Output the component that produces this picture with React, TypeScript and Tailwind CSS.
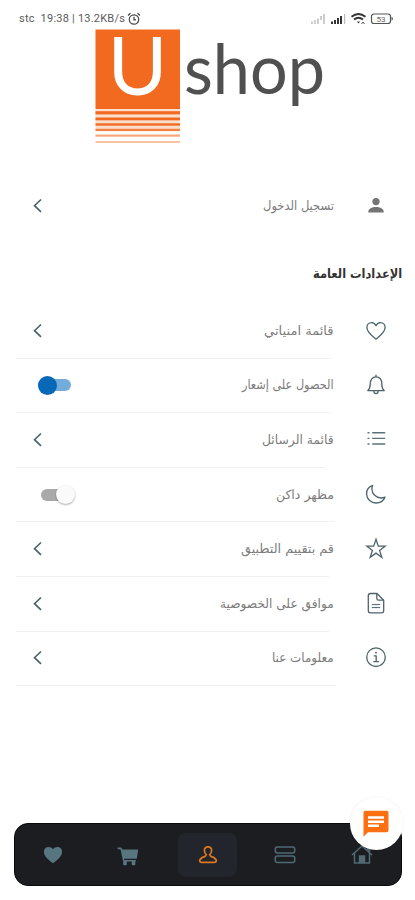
import React from "react";

const ink = "#4d646b";

function Icon({ name }: { name: string }) {
  const p = { fill: "none", stroke: ink, strokeWidth: 1.3, strokeLinecap: "round" as const, strokeLinejoin: "round" as const };
  return (
    <svg className="h-6 w-6 shrink-0" viewBox="0 0 24 24">
      {name === "user" && (
        <g fill="#747474">
          <circle cx="12" cy="7.6" r="3.6" />
          <path d="M4.4 18.5v-1.2c0-3 4.4-4.4 7.6-4.4s7.6 1.4 7.6 4.4v1.2z" />
        </g>
      )}
      {name === "heart" && <path {...p} d="M12 20.2C7.5 16.8 2.9 12.8 2.9 8.6c0-2.8 2-5 4.6-5 1.9 0 3.6 1.1 4.5 3 .9-1.9 2.6-3 4.5-3 2.6 0 4.6 2.2 4.6 5 0 4.2-4.6 8.2-9.1 11.6z" />}
      {name === "bell" && <path {...p} d="M12 2.2v1.700M3.800 17.600c1.700-1.400 2.400-3.200 2.400-6.500 0-4.400 2.200-7.200 5.800-7.200s5.800 2.800 5.800 7.200c0 3.300.7 5.100 2.400 6.500zM9.800 18c.1 1.900 1 2.700 2.200 2.700s2.100-.8 2.200-2.700" />}
      {name === "list" && (
        <g stroke="#5d7278" strokeWidth="1.400">
          <path d="M8.200 4.700h13M8.200 10.400h13M8.200 16h13M3.500 4.700h2M3.500 10.400h2M3.500 16h2" />
        </g>
      )}
      {name === "moon" && <path {...p} d="M8.700 2.400C4.900 3.700 2.600 6.800 2.600 10.700c0 5.200 4.200 9.300 9.400 9.300 4 0 7.500-2.200 9-5.800-1.300.6-2.500.8-3.900.8-5.100 0-9.200-4.100-9.200-9 0-1.300.2-2.500.8-3.600z" />}
      {name === "star" && <path {...p} strokeLinejoin="miter" d="M12 2.300l2.300 6.900h6.800l-5.500 4.200 2.200 6.900-5.800-4.200-5.800 4.200 2.200-6.900-5.500-4.200h6.800z" />}
      {name === "doc" && (
        <g {...p}>
          <path d="M13 1.500H6.500c-1.300 0-2.200.9-2.200 2.200v14.900c0 1.300.9 2.200 2.200 2.200h11c1.300 0 2.200-.9 2.200-2.200V8.200z" />
          <path d="M12.800 1.700v4.700c0 1.200.7 1.800 1.800 1.800h4.900" />
          <path d="M8.200 12.600h7.600M8.200 15.600h7.600" strokeWidth="1" />
        </g>
      )}
      {name === "info" && (
        <g {...p}>
          <circle cx="12" cy="11.200" r="9.300" />
          <path d="M10.200 9.800h2v5.800M9.900 15.700h4.500" />
          <circle cx="12" cy="6.700" r=".9" fill={ink} stroke="none" />
        </g>
      )}
    </svg>
  );
}

function Chevron() {
  return (
    <svg className="ml-[33px] h-4 w-[9px]" viewBox="0 0 9 16" fill="none" stroke="#486368" strokeWidth="1.600">
      <path d="M8 1.500L1.500 7.700 8 13.900" />
    </svg>
  );
}

function Toggle({ on }: { on?: boolean }) {
  return on ? (
    <div className="ml-[38px] flex h-3 w-[33px] items-center rounded-full bg-[#73acdb]">
      <div className="h-[19px] w-[19px] shrink-0 rounded-full bg-[#0868b8]" />
    </div>
  ) : (
    <div className="ml-[41px] flex h-3 w-[34px] items-center justify-end rounded-full bg-[linear-gradient(to_right,#a9a9a9_70%,transparent_70%)]">
      <div className="h-[19px] w-[19px] shrink-0 rounded-full bg-[#fafafa] shadow-[0_1px_2px_#0005]" />
    </div>
  );
}

type Item = { icon: string; label: string; width: number; control?: "on" | "off"; line?: string };

const items: Item[] = [
  { icon: "heart", label: "قائمة امنياتي", width: 70, line: "w-[316px]" },
  { icon: "bell", label: "الحصول على إشعار", width: 92, control: "on", line: "w-[316px]" },
  { icon: "list", label: "قائمة الرسائل", width: 72, line: "w-[309px]" },
  { icon: "moon", label: "مظهر داكن", width: 58, control: "off", line: "w-[319px]" },
  { icon: "star", label: "قم بتقييم التطبيق", width: 93, line: "w-[313px]" },
  { icon: "doc", label: "موافق على الخصوصية", width: 114, line: "w-[313px]" },
  { icon: "info", label: "معلومات عنا", width: 62, line: "w-[320px]" },
];

// Narrows or widens a label so that its line has the given measure.
function Fit({ text, width, className }: { text: string; width: number; className: string }) {
  const ref = React.useRef<HTMLSpanElement>(null);
  const [scale, setScale] = React.useState(1);
  React.useLayoutEffect(() => {
    if (ref.current) setScale(width / ref.current.offsetWidth);
  }, [width]);
  return (
    <span ref={ref} dir="rtl" className={"inline-block origin-right whitespace-nowrap " + className} style={{ transform: `scaleX(${scale})` }}>
      {text}
    </span>
  );
}

function Row({ item }: { item: Item }) {
  return (
    <div className="h-[54.600px]">
      <div className="flex h-[53.600px] items-center">
        {item.control ? <Toggle on={item.control === "on"} /> : <Chevron />}
        <div className="flex flex-1 justify-end pr-[29.500px]">
          <Fit text={item.label} width={item.width} className="text-[12.500px] leading-5 text-[#7c7c7c]" />
        </div>
        <div className="mr-[27.500px] flex"><Icon name={item.icon} /></div>
      </div>
      {item.line && <div className={"ml-4 h-px bg-[#f1f1f1] " + item.line} />}
    </div>
  );
}

function Logo() {
  return (
    <svg className="ml-[94px] h-[118px] w-[232px] overflow-visible" viewBox="94 28 232 118">
      <rect x="95.500" y="29.500" width="84.500" height="79.500" fill="#f26a20" />
      <g fill="#f26a20">
        <rect x="95.500" y="111.200" width="84.500" height="3.200" />
        <rect x="95.500" y="117.500" width="84.500" height="2.800" />
        <rect x="95.500" y="123.300" width="84.500" height="2.400" />
        <rect x="95.500" y="128.800" width="84.500" height="2.300" opacity=".85" />
        <rect x="95.500" y="134.500" width="84.500" height="2.200" opacity=".6" />
        <rect x="95.500" y="141" width="84.500" height="2" opacity=".4" />
        <rect x="95.500" y="109" width="84.500" height="20" opacity=".22" />
      </g>
      <text x="107.500" y="95" fontFamily="Lato, sans-serif" fontSize="82" fill="#fff" textLength="60" lengthAdjust="spacingAndGlyphs">U</text>
      <text x="184" y="94" fontFamily="Lato, sans-serif" fontSize="69" fill="#505050" textLength="141" lengthAdjust="spacingAndGlyphs">shop</text>
    </svg>
  );
}

function StatusBar() {
  return (
    <div className="flex h-7 items-center pt-[10px] text-[#5b5b5b]">
      <span className="ml-[19px] whitespace-pre font-[Roboto] text-[11px] leading-4 tracking-[0.220px]">stc  19:38 | 13.2KB/s</span>
      <svg className="ml-[2px] h-[14px] w-[14px]" viewBox="0 0 14 14" fill="none" stroke="#444" strokeWidth="1.200">
        <circle cx="7" cy="7.500" r="4.700" /><path d="M7 4.800v3h2M1 3.500l2.500-2.200M13 3.500l-2.500-2.200" />
      </svg>
      <svg className="ml-auto mr-[20px] h-[14px] w-[86px]" viewBox="0 0 86 14">
        <g fill="#ccc"><rect x="2" y="9.500" width="2" height="2.500" /><rect x="5" y="8" width="2" height="4" /><rect x="8" y="6.500" width="2" height="5.500" /><rect x="11" y="4" width="2" height="4" /><rect x="14" y="2" width="2" height="10" /></g>
        <g fill="#333"><rect x="22" y="9.500" width="2" height="2.500" /><rect x="25" y="8" width="2" height="4" /><rect x="28" y="6" width="2" height="6" /><rect x="31" y="4" width="2" height="8" /><rect x="35" y="2" width="1.200" height="10" fill="#bbb" /></g>
        <g fill="none" stroke="#333" strokeWidth="2"><path d="M42.500 4.800q7-5.500 14 0M45 7.500q4.500-3.500 9 0" /><path d="M48 9.500h3l-1.500 2z" fill="#333" stroke="none" /><path d="M52.500 12l1.500-2 1.500 2" strokeWidth=".8" /></g>
        <rect x="62.500" y="2" width="19" height="9.500" rx="2.500" fill="none" stroke="#555" strokeWidth="1.200" />
        <path d="M82.500 4.700q3 2 0 4z" fill="#555" />
        <text x="72" y="9.500" textAnchor="middle" fontFamily="Roboto, sans-serif" fontSize="8" fill="#666">53</text>
      </svg>
    </div>
  );
}

function BottomNav() {
  return (
    <nav className="relative ml-[14px] flex h-[63px] w-[388px] items-center rounded-[14px] border-[1.500px] border-[#07090b] bg-[#1b1d21]">
      <div className="flex w-[75px] justify-center">
        <svg className="h-5 w-5" viewBox="0 0 20 20" fill="#587680"><path d="M10 18.200C5.500 14.800.9 11.300.9 6.700c0-2.900 2.100-4.800 4.600-4.800 1.800 0 3.500.8 4.500 2.400 1-1.600 2.700-2.400 4.500-2.400 2.500 0 4.600 1.900 4.600 4.800 0 4.600-4.600 8.100-9.100 11.500z" /></svg>
      </div>
      <div className="flex w-[76px] justify-center">
        <svg className="mt-[4px] h-[22px] w-[22px]" viewBox="0 0 22 22" fill="#587680">
          <path d="M.5 1.500h3.300c.6 0 .9.300 1.100.9l.3 1h16l-1.300 8.500c-.1.600-.5.900-1.100.9H7l.2 1.200h11.600v1.400H6.800c-.5 0-.8-.3-.9-.8L3.600 3.400.5 2.900z" />
          <rect x="6.200" y="15" width="3.600" height="4.300" rx="1" /><rect x="14.700" y="15" width="3.600" height="4.300" rx="1" />
        </svg>
      </div>
      <div className="ml-[12px] flex h-11 w-[59px] items-center justify-center rounded-lg bg-[#22252c]">
        <svg className="h-5 w-5" viewBox="0 0 20 20" fill="none" stroke="#dd771e" strokeWidth="1.700" strokeLinejoin="round">
          <path d="M10 1.800c-2.200 0-3.600 1.500-3.600 3.700 0 1.800.8 3.400 2 4.200-.2 1-.9 1.500-1.900 1.900-2.300.9-4.800 1.900-4.800 4.200 0 1 .8 1.600 2 1.600h12.600c1.200 0 2-.6 2-1.600 0-2.300-2.500-3.300-4.800-4.200-1-.4-1.700-.9-1.900-1.900 1.200-.8 2-2.400 2-4.200 0-2.200-1.400-3.700-3.600-3.700z" />
        </svg>
      </div>
      <div className="ml-[9px] flex w-[78px] justify-center">
        <svg className="h-5 w-[22px]" viewBox="0 0 22 20" fill="none" stroke="#506a76" strokeWidth="1.500"><rect x="1.300" y="2" width="19.400" height="6" rx="2" /><rect x="1.300" y="11" width="19.400" height="6.500" rx="2" /></svg>
      </div>
      <div className="flex w-[76px] justify-center">
        <svg className="h-[22px] w-[22px]" viewBox="0 0 22 22" fill="none" stroke="#506a76" strokeWidth="1.500"><path d="M1 11L11 2l10 9M3.500 9v10h15V9" /><path d="M8.500 19v-7h5v7M16.500 6V2.500h2V8" fill="#506a76" /></svg>
      </div>
      <button className="absolute left-[334.500px] top-[-27px] flex h-[53px] w-[53px] items-center justify-center rounded-full bg-white shadow-[0_0_3px_#0001]">
        <svg className="h-7 w-7" viewBox="0 0 28 28">
          <path d="M3.500.8h21c1.200 0 2 .8 2 2v17.400c0 1.200-.8 2-2 2H6l-4.500 4.500V2.800c0-1.200.8-2 2-2z" fill="#fc7011" />
          <path d="M6 7.500h16M6 11.700h16M6 15.700h11" stroke="#fff" strokeWidth="2.400" />
        </svg>
      </button>
    </nav>
  );
}

export default function App() {
  return (
    <main className="flex h-[900px] w-[415px] flex-col overflow-hidden bg-white font-['DejaVu_Sans',sans-serif]">
      <StatusBar />
      <Logo />
      <div className="mt-[33px]"><Row item={{ icon: "user", label: "تسجيل الدخول", width: 71 }} /></div>
      <h2 className="mt-[30px] flex h-[22px] justify-end pr-[13px]">
        <Fit text="الإعدادات العامة" width={89} className="text-[13px] font-bold leading-5 text-[#333]" />
      </h2>
      <section className="mt-[18.500px]">
        {items.map((item) => <Row key={item.label} item={item} />)}
      </section>
      <div className="mt-auto pb-[14px]"><BottomNav /></div>
    </main>
  );
}
